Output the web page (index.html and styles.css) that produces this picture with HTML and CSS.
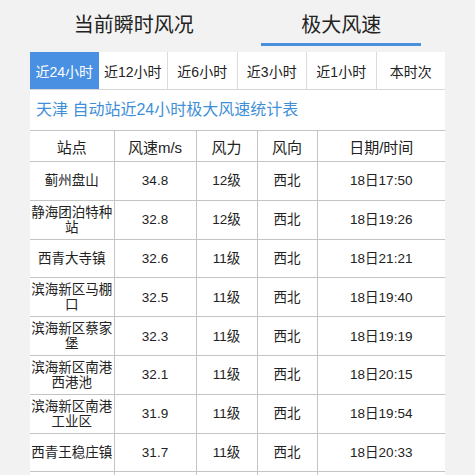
FILE: index.html
```html
<!DOCTYPE html>
<html lang="zh-CN">
<head>
<meta charset="utf-8">
<link rel="stylesheet" href="styles.css">
</head>
<body>
<div class="page">
  <div class="top-tabs">
    <div class="top-tab"><span class="top-label">当前瞬时风况</span></div>
    <div class="top-tab active"><span class="top-label">极大风速</span></div>
  </div>
  <div class="range-tabs">
    <div class="range-tab active">近24小时</div>
    <div class="range-tab">近12小时</div>
    <div class="range-tab">近6小时</div>
    <div class="range-tab">近3小时</div>
    <div class="range-tab">近1小时</div>
    <div class="range-tab">本时次</div>
  </div>
  <div class="panel">
    <div class="caption">天津 自动站近24小时极大风速统计表</div>
    <table class="grid">
      <colgroup>
        <col class="c1"><col class="c2"><col class="c3"><col class="c4"><col class="c5">
      </colgroup>
      <thead>
        <tr><th>站点</th><th>风速m/s</th><th>风力</th><th>风向</th><th>日期/时间</th></tr>
      </thead>
      <tbody>
        <tr><td>蓟州盘山</td><td>34.8</td><td>12级</td><td>西北</td><td>18日17:50</td></tr>
        <tr><td>静海团泊特种站</td><td>32.8</td><td>12级</td><td>西北</td><td>18日19:26</td></tr>
        <tr><td>西青大寺镇</td><td>32.6</td><td>11级</td><td>西北</td><td>18日21:21</td></tr>
        <tr><td>滨海新区马棚口</td><td>32.5</td><td>11级</td><td>西北</td><td>18日19:40</td></tr>
        <tr><td>滨海新区蔡家堡</td><td>32.3</td><td>11级</td><td>西北</td><td>18日19:19</td></tr>
        <tr><td>滨海新区南港西港池</td><td>32.1</td><td>11级</td><td>西北</td><td>18日20:15</td></tr>
        <tr><td>滨海新区南港工业区</td><td>31.9</td><td>11级</td><td>西北</td><td>18日19:54</td></tr>
        <tr><td>西青王稳庄镇</td><td>31.7</td><td>11级</td><td>西北</td><td>18日20:33</td></tr>
        <tr><td>&nbsp;</td><td></td><td></td><td></td><td></td></tr>
      </tbody>
    </table>
  </div>
</div>
</body>
</html>
```

FILE: styles.css
```css
html, body {
  margin: 0;
  padding: 0;
  background: #f2f2f2;
  font-family: "Liberation Sans", "Noto Sans CJK SC", sans-serif;
  color: #222;
  overflow: hidden;
}

.page {
  width: 415px;
  margin: 0 auto;
}

.top-tabs {
  display: flex;
  height: 52px;
}

.top-tab {
  flex: 1;
  display: flex;
  justify-content: center;
  align-items: flex-start;
}

.top-label {
  display: block;
  width: 160px;
  text-align: center;
  font-size: 20px;
  line-height: 26px;
  padding-top: 12px;
  padding-bottom: 5px;
  border-bottom: 3px solid transparent;
  color: #222;
}

.top-tab.active .top-label {
  border-bottom-color: #4a8fdc;
}

.range-tabs {
  display: flex;
  height: 37px;
  background: #fff;
  border-bottom: 1px solid #d6d6d6;
  box-shadow: 0 1px 1px rgba(0,0,0,0.06);
}

.range-tab {
  flex: 1;
  display: flex;
  align-items: center;
  justify-content: center;
  font-size: 14px;
  color: #222;
  border-right: 1px solid #dcdcdc;
}

.range-tab:last-child {
  border-right: none;
}

.range-tab.active {
  background: #4a90e2;
  color: #fff;
  border-right: none;
}

.panel {
  background: #fff;
}

.caption {
  height: 40px;
  line-height: 40px;
  padding-left: 6px;
  font-size: 16px;
  color: #3f8fd8;
}

.grid {
  width: 415px;
  table-layout: fixed;
  border-collapse: collapse;
  border-top: 1px solid #c4c4c4;
}

.c1 { width: 84px; }
.c2 { width: 82px; }
.c3 { width: 61px; }
.c4 { width: 60px; }
.c5 { width: 128px; }

.grid th, .grid td {
  border: 1px solid #c4c4c4;
  text-align: center;
  padding: 0 1px;
  font-weight: normal;
  color: #222;
}

.grid tr > :first-child { border-left: none; }
.grid tr > :last-child { border-right: none; }

.grid th {
  height: 30px;
  font-size: 15px;
}

.grid td {
  height: 37.8px;
  font-size: 13.5px;
  line-height: 15px;
}
```
